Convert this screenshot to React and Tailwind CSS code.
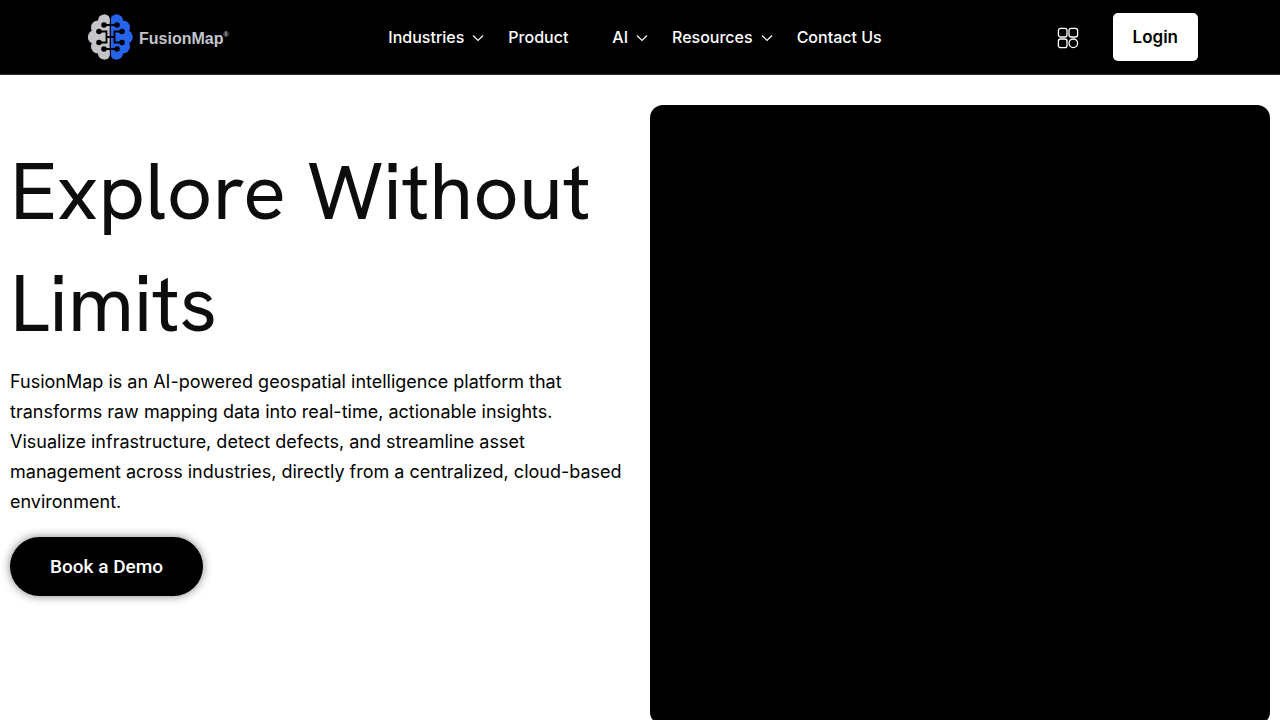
import { useState } from 'react';

const navItems = [
  { label: 'Industries', menu: true, gap: 'mr-6' },
  { label: 'Product', menu: false, gap: 'mr-11' },
  { label: 'AI', menu: true, gap: 'mr-6' },
  { label: 'Resources', menu: true, gap: 'mr-6' },
  { label: 'Contact Us', menu: false, gap: '' }
];

function BrainLogo() {
  return (
    <svg viewBox="0 0 46 46" className="h-[46px] w-[46px] shrink-0" aria-hidden="true">
      <g fill="#c3c5c8">
        <circle cx="17" cy="6.5" r="6" />
        <circle cx="11" cy="13.5" r="7" />
        <circle cx="8" cy="23" r="7.2" />
        <circle cx="11" cy="32.5" r="7" />
        <circle cx="17" cy="39.5" r="6" />
        <path d="M10 9H22.4V37H10Z" />
        <path d="M17 .5Q22.4 .5 22.4 5V41Q22.4 45.5 17 45.5Z" />
      </g>
      <g fill="#2563eb">
        <circle cx="30" cy="6.5" r="6" />
        <circle cx="36" cy="13.5" r="7" />
        <circle cx="38.6" cy="23" r="7.2" />
        <circle cx="36" cy="32.5" r="7" />
        <circle cx="30" cy="39.5" r="6" />
        <path d="M24 9H37V37H24Z" />
        <path d="M30 .5Q24 .5 24 5V41Q24 45.5 30 45.5Z" />
      </g>
      <g fill="none" stroke="#000" strokeWidth="1.8">
        <path d="M17 11H30M17 35H30M12 17.5H19.5V28.5H12M35 17.5H27.5V28.5H35M19.5 23H27.5" />
      </g>
      <g fill="#000">
        <circle cx="17" cy="11" r="2.8" />
        <circle cx="30" cy="11" r="2.8" />
        <circle cx="12" cy="17.5" r="2.8" />
        <circle cx="35" cy="17.5" r="2.8" />
        <circle cx="12" cy="28.5" r="2.8" />
        <circle cx="35" cy="28.5" r="2.8" />
        <circle cx="17" cy="35" r="2.8" />
        <circle cx="30" cy="35" r="2.8" />
      </g>
    </svg>
  );
}

function Chevron() {
  return (
    <svg viewBox="0 0 12 12" className="mt-0.5 h-3 w-3" fill="none" stroke="currentColor" strokeWidth="1.2" aria-hidden="true">
      <path d="M1 3.5L6 8.5L11 3.5" />
    </svg>
  );
}

function AppsIcon() {
  return (
    <svg viewBox="0 0 22 22" className="mt-0.5 h-[22px] w-[22px]" fill="none" stroke="currentColor" strokeWidth="1.3" aria-hidden="true">
      <rect x="1.4" y="1.4" width="8.6" height="8.6" rx="2.2" />
      <rect x="12" y="1.4" width="8.6" height="8.6" rx="2.2" />
      <rect x="1.4" y="12" width="8.6" height="8.6" rx="2.2" />
      <circle cx="16.3" cy="16.3" r="4.3" />
    </svg>
  );
}

function Header() {
  const [open, setOpen] = useState('');

  return (
    <header className="grid h-[75px] grid-cols-[1fr_auto_1fr] items-center border-b border-[#2b2b2b] bg-black text-white">
      <a href="#home" className="ml-[87px] flex items-center gap-1.5 justify-self-start">
        <BrainLogo />
        <span className="flex pt-1 font-['Liberation_Sans',Arial,sans-serif] text-base leading-5 font-bold text-[#c3c5c8]">
          FusionMap
          <span className="text-[7px] leading-3">®</span>
        </span>
      </a>

      <nav className="mr-2.5 flex items-center text-base leading-6 font-medium" aria-label="Main">
        {navItems.map((item) =>
          item.menu ? (
            <button
              key={item.label}
              type="button"
              aria-expanded={open === item.label}
              onClick={() => setOpen(open === item.label ? '' : item.label)}
              className={`flex items-center gap-2 ${item.gap}`}
            >
              {item.label}
              <Chevron />
            </button>
          ) : (
            <a key={item.label} href={`#${item.label}`} className={item.gap}>
              {item.label}
            </a>
          )
        )}
      </nav>

      <div className="mr-[82px] flex items-center gap-[34px] justify-self-end">
        <button type="button" aria-label="Apps">
          <AppsIcon />
        </button>
        <a href="#login" className="rounded-[5px] bg-white px-5 py-3 text-[17px] leading-6 font-semibold text-black">
          Login
        </a>
      </div>
    </header>
  );
}

export default function App() {
  return (
    <div className="min-h-screen bg-white font-['Inter',sans-serif] text-black">
      <Header />
      <main className="grid grid-cols-2 pt-[30px]">
        <section className="px-2.5 pt-[30px]">
          <h1 className="font-['Hanken_Grotesk','Inter',sans-serif] text-[80px] leading-[112px] text-[#0d0d0d]">
            Explore Without Limits
          </h1>
          <p className="mt-2 text-lg leading-[30px]">
            FusionMap is an AI-powered geospatial intelligence platform that transforms raw mapping data into
            real-time, actionable insights. Visualize infrastructure, detect defects, and streamline asset management
            across industries, directly from a centralized, cloud-based environment.
          </p>
          <a
            href="#demo"
            className="mt-5 inline-block rounded-full bg-black px-10 py-4 font-['Roboto',sans-serif] text-[19px] leading-[27px] font-medium text-white shadow-[0_0_10px_rgba(0,0,0,0.5)]"
          >
            Book a Demo
          </a>
        </section>
        <section className="px-2.5" aria-label="Product video">
          <div className="aspect-square rounded-[13px] bg-black" />
        </section>
      </main>
    </div>
  );
}
